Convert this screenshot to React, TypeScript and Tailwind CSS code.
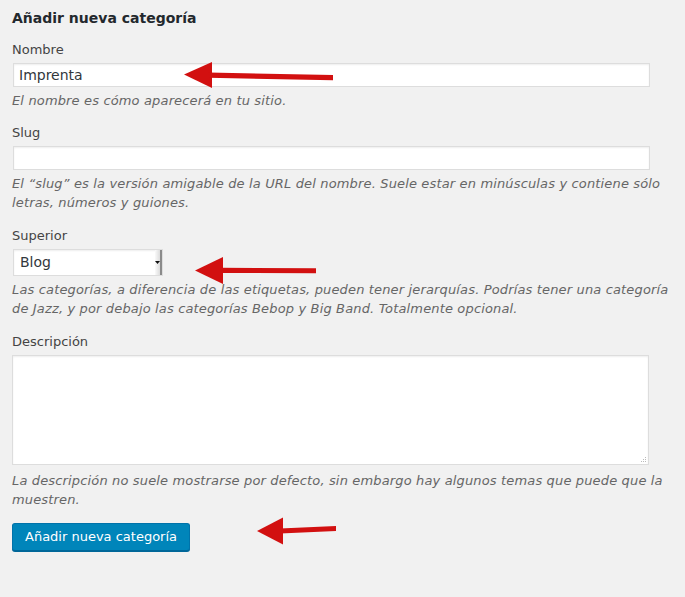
import React from "react";

const Label = ({ children, className = "" }: { children: React.ReactNode; className?: string }) => (
  <label className={`block leading-[19px] text-[#444] ${className}`}>{children}</label>
);

const Hint = ({ children, className = "" }: { children: React.ReactNode; className?: string }) => (
  <p className={`italic leading-[19px] tracking-[0.15px] text-[#666] ${className}`}>{children}</p>
);

const App = () => {
  return (
    <div className="relative h-[597px] w-[685px] overflow-hidden bg-[#f1f1f1] font-['DejaVu_Sans',sans-serif] text-[13px]">
      <div className="pl-3 pr-px pt-2">
        <h3 className="text-[14px] font-bold leading-[20px] text-[#23282d]">Añadir nueva categoría</h3>

        {/* Nombre */}
        <Label className="mt-3">Nombre</Label>
        <div className="ml-px mt-1 flex h-6 w-[637px] items-center border border-[#ddd] bg-white px-[5px] text-[14px] text-[#32373c] shadow-[inset_0_1px_2px_rgba(0,0,0,0.07)]">
          Imprenta
        </div>
        <Hint className="mt-1">El nombre es cómo aparecerá en tu sitio.</Hint>

        {/* Slug */}
        <Label className="mt-[13px]">Slug</Label>
        <div className="ml-px mt-1 h-6 w-[637px] border border-[#ddd] bg-white shadow-[inset_0_1px_2px_rgba(0,0,0,0.07)]" />
        <Hint className="mt-1 w-[670px]">
          El “slug” es la versión amigable de la URL del nombre. Suele estar en minúsculas y contiene sólo letras, números y guiones.
        </Hint>

        {/* Superior */}
        <Label className="mt-[14px]">Superior</Label>
        <div className="ml-px mt-1 flex h-[27px] w-[150px] border border-[#ddd] bg-white shadow-[inset_0_1px_2px_rgba(0,0,0,0.07)]">
          <div className="flex flex-1 items-center pl-[6px] text-[14px] text-[#32373c]">Blog</div>
          <div className="flex w-[7px] items-center justify-center border-r-2 border-[#8a8a8a] bg-gradient-to-r from-[#fafafa] to-[#dcdcdc]">
            <svg width="5" height="3" viewBox="0 0 5 3">
              <path d="M0 0h5L2.5 3z" fill="#111" />
            </svg>
          </div>
        </div>
        <Hint className="mt-1 w-[670px]">
          Las categorías, a diferencia de las etiquetas, pueden tener jerarquías. Podrías tener una categoría de Jazz, y por debajo las categorías Bebop y Big Band. Totalmente opcional.
        </Hint>

        {/* Descripción */}
        <Label className="mt-[14px]">Descripción</Label>
        <div className="relative mt-1 h-[110px] w-[637px] border border-[#ddd] bg-white shadow-[inset_0_1px_2px_rgba(0,0,0,0.07)]">
          <svg className="absolute bottom-[1px] right-[1px]" width="6" height="6" viewBox="0 0 6 6">
            <rect x="4" y="0" width="1" height="1" fill="#bbb" />
            <rect x="2" y="2" width="1" height="1" fill="#bbb" />
            <rect x="4" y="2" width="1" height="1" fill="#bbb" />
            <rect x="0" y="4" width="1" height="1" fill="#bbb" />
            <rect x="2" y="4" width="1" height="1" fill="#bbb" />
            <rect x="4" y="4" width="1" height="1" fill="#bbb" />
          </svg>
        </div>
        <Hint className="mt-[6px] w-[670px]">
          La descripción no suele mostrarse por defecto, sin embargo hay algunos temas que puede que la muestren.
        </Hint>

        <button className="mt-[14px] flex h-7 items-center rounded-[3px] border border-[#0073aa] border-b-[#006799] bg-[#0085ba] px-3 text-[13px] text-white shadow-[0_1px_0_#006799]">
          Añadir nueva categoría
        </button>
      </div>

      {/* red arrows drawn over the form */}
      <svg className="pointer-events-none absolute left-0 top-0" width="685" height="597" viewBox="0 0 685 597">
        <g fill="#d21010">
          <polygon points="184,74.5 212,62 212,88" />
          <polygon points="208,72.5 333,75 333,80.3 208,77.7" />
          <polygon points="195,270.5 223,257 223,284" />
          <polygon points="220,267.8 316,268.2 316,273.3 220,272.9" />
          <polygon points="257,531 283,517.5 283,544.5" />
          <polygon points="280,528.6 336,525.9 336,530.9 280,533.6" />
        </g>
      </svg>
    </div>
  );
};

export default App;
